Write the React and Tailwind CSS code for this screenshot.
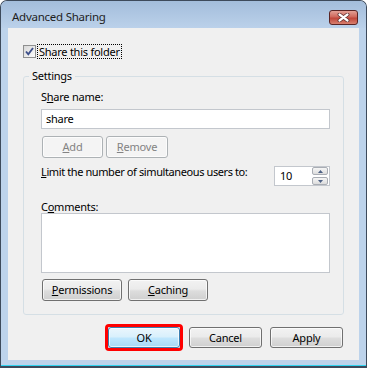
import React from 'react';

const FONT = "font-['Noto_Sans',sans-serif]";

const Btn = ({ children, className = '', variant = 'normal' }) => {
    const styles = {
        normal: 'border-[#707070] bg-[linear-gradient(#f2f2f2,#ebebeb_45%,#dddddd_55%,#cfcfcf)] text-black',
        primary: 'border-[#3c7fb1] bg-[linear-gradient(#eaf6fd,#d9f0fc_45%,#bee6fd_55%,#a7d9f5)] text-black',
        disabled: 'border-[#adb2b5] bg-[#f4f4f4] text-[#838383]',
    };
    return (
        <button
            type="button"
            className={`flex items-center justify-center rounded-[3px] border shadow-[inset_0_0_0_1px_rgba(255,255,255,0.7)] text-[11px] leading-[14px] tracking-[-0.2px] ${styles[variant]} ${className}`}
        >
            {children}
        </button>
    );
};

const CloseButton = () => (
    <div className="mt-[9px] w-[29px] h-[15px] rounded-[3px] border border-[#5a2424] bg-[linear-gradient(#e3a095,#d0685c_45%,#c0463a_55%,#d8806f)] flex items-center justify-center">
        <svg width="13" height="9" viewBox="0 0 13 9">
            <path d="M2.5 1.5 L10.5 7.5 M10.5 1.5 L2.5 7.5" stroke="#5b2a2a" strokeWidth="3.8" strokeLinecap="round" />
            <path d="M2.5 1.5 L10.5 7.5 M10.5 1.5 L2.5 7.5" stroke="#ffffff" strokeWidth="2.2" strokeLinecap="round" />
        </svg>
    </div>
);

const Checkbox = () => (
    <div className="w-[13px] h-[13px] border border-[#8e8f8f] bg-[linear-gradient(135deg,#d8d8d8,#fbfbfb)] flex items-center justify-center">
        <svg width="11" height="11" viewBox="0 0 11 11">
            <path d="M2 5.5 L4.3 8.3 L9 2" fill="none" stroke="#3d4f8a" strokeWidth="1.9" />
        </svg>
    </div>
);

const SpinArrow = ({ up }) => (
    <div className="h-[8px] rounded-[2px] border border-[#a9adb4] bg-[linear-gradient(#f6f6f6,#dcdcdc)] flex items-center justify-center">
        <svg width="5" height="3" viewBox="0 0 5 3">
            <path d={up ? 'M0 3 L2.5 0 L5 3 Z' : 'M0 0 L2.5 3 L5 0 Z'} fill="#4d6185" />
        </svg>
    </div>
);

export default function App() {
    return (
        <div className={`w-[367px] h-[368px] ${FONT} text-[11px] tracking-[-0.25px] text-black`}>
            <div className="w-full h-full flex flex-col bg-[#bdd3eb] border border-b-2 border-[#3d4a5b] rounded-t-[7px] overflow-hidden">
                {/* Title bar */}
                <div className="h-[27px] shrink-0 flex items-start justify-between pl-[11px] pr-[8px] bg-[linear-gradient(#a3bddb,#bbd1ea)]">
                    <span className="mt-[8px] text-[11.5px] leading-[16px] text-[#1e1e1e]">Advanced Sharing</span>
                    <CloseButton />
                </div>

                {/* Body */}
                <div className="flex-1 flex flex-col px-[7px] pb-[5px]">
                    <div className="flex-1 flex flex-col bg-[#f0f0f0] pt-[16px]">
                        <div className="flex items-center ml-[15px] h-[15px]">
                            <Checkbox />
                            <span className="ml-[1px] border border-dotted border-black px-[1px] leading-[13px]">Share this folder</span>
                        </div>

                        <fieldset className="mx-[15px] mt-[9px] rounded-[3px] border border-[#d5dfe5] p-0">
                            <legend className="ml-[5px] px-[3px] leading-[16px]">Settings</legend>
                            <div className="flex flex-col pl-[17px] pr-[13px] pb-[13px]">
                                <label className="mt-[7px] leading-[12px]">S<u>h</u>are name:</label>
                                <div className="mt-[6px] h-[20px] border border-[#c3c7cd] bg-white pl-[4px] flex items-center leading-[14px]">share</div>

                                <div className="mt-[7px] flex gap-[3px] pl-[1px]">
                                    <Btn variant="disabled" className="w-[61px] h-[22px]"><u>A</u>dd</Btn>
                                    <Btn variant="disabled" className="w-[62px] h-[22px]"><u>R</u>emove</Btn>
                                </div>

                                <div className="mt-[7px] flex items-start justify-between">
                                    <span className="mt-[1px] leading-[12px] whitespace-nowrap tracking-[-0.4px]"><u>L</u>imit the number of simultaneous users to:</span>
                                    <div className="mt-[1px] w-[56px] h-[20px] border border-[#c3c7cd] bg-white flex">
                                        <span className="flex-1 pl-[5px] leading-[18px]">10</span>
                                        <div className="w-[16px] mr-px flex flex-col gap-[2px]">
                                            <SpinArrow up />
                                            <SpinArrow />
                                        </div>
                                    </div>
                                </div>

                                <label className="mt-[15px] leading-[12px]">C<u>o</u>mments:</label>
                                <div className="h-[60px] border border-[#c3c7cd] bg-white" />

                                <div className="mt-[6px] flex gap-[6px] pl-[1px]">
                                    <Btn className="w-[80px] h-[22px]"><u>P</u>ermissions</Btn>
                                    <Btn className="w-[80px] h-[22px]"><u>C</u>aching</Btn>
                                </div>
                            </div>
                        </fieldset>

                        {/* Footer */}
                        <div className="mt-[9px] flex items-center justify-end pr-[16px]">
                            <div className="mr-[6px] rounded-[4px] border-[3px] border-[#ff0000]">
                                <Btn variant="primary" className="w-[72px] h-[21px]">OK</Btn>
                            </div>
                            <Btn className="w-[73px] h-[21px] mr-[8px]">Cancel</Btn>
                            <Btn className="w-[73px] h-[21px]">Apply</Btn>
                        </div>
                    </div>
                </div>
                <div className="h-px shrink-0 bg-[#30d4f1]" />
            </div>
        </div>
    );
}
